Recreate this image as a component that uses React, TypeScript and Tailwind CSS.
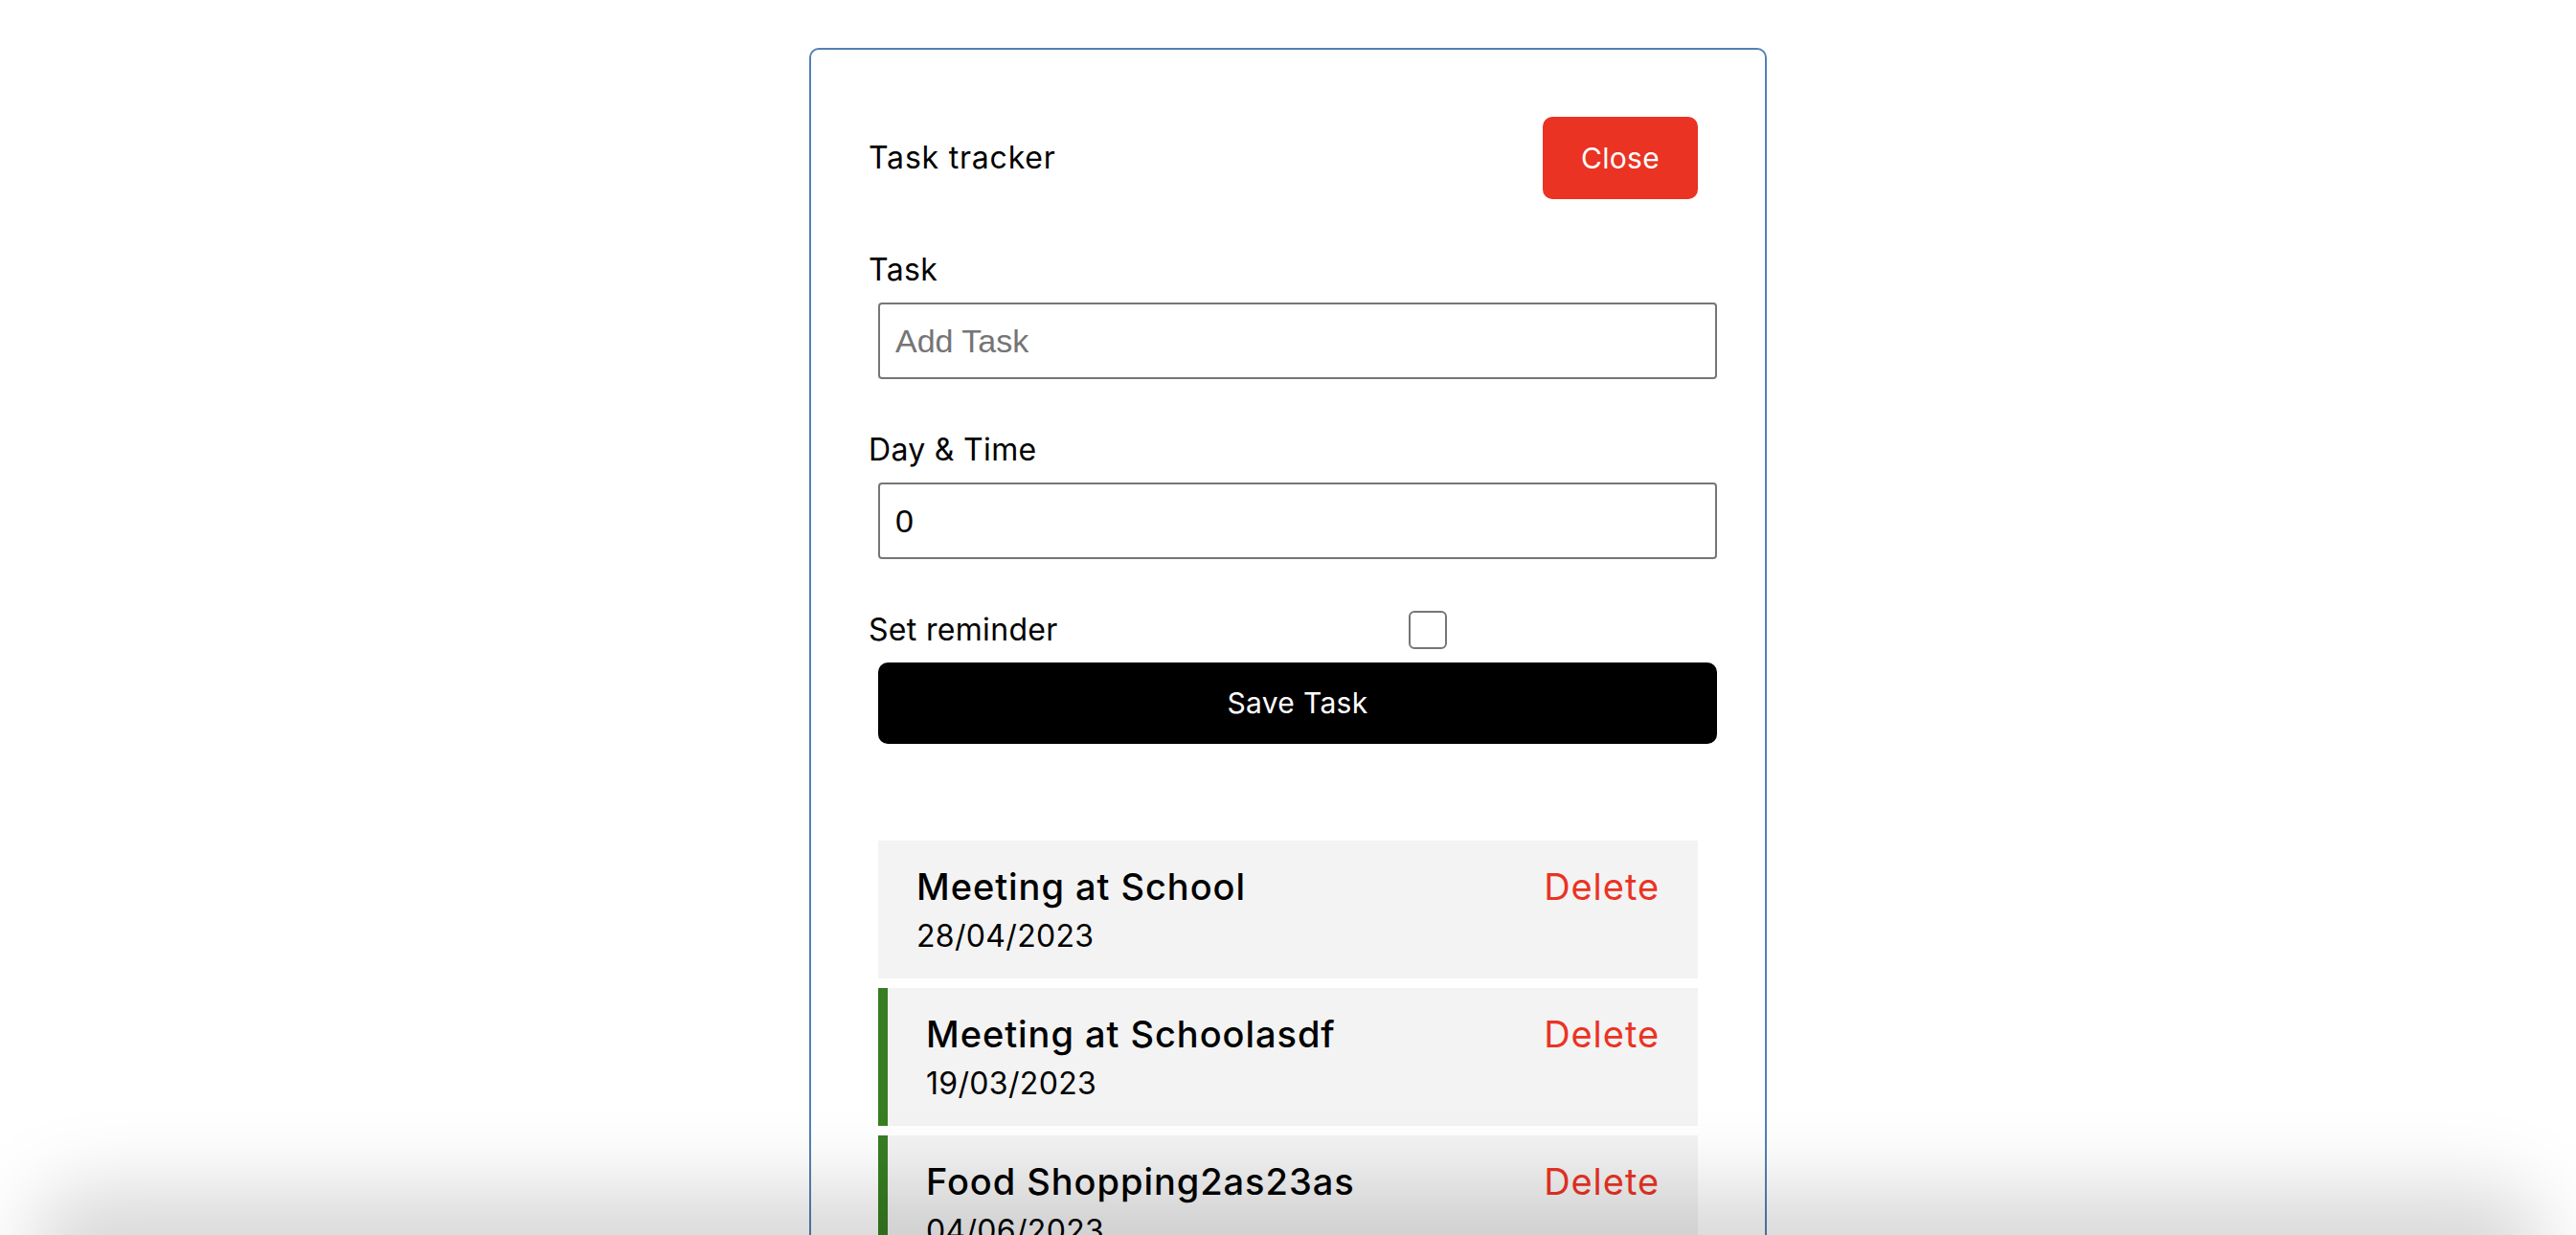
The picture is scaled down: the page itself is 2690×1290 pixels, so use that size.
import React from 'react';

interface Task {
  id: number;
  text: string;
  day: string;
  reminder: boolean;
}

const tasks: Task[] = [
  { id: 1, text: 'Meeting at School', day: '28/04/2023', reminder: false },
  { id: 2, text: 'Meeting at Schoolasdf', day: '19/03/2023', reminder: true },
  { id: 3, text: 'Food Shopping2as23as', day: '04/06/2023', reminder: true },
];

const font = "font-['Inter','Noto_Sans',sans-serif] tracking-[0.02em]";

const App: React.FC = () => {
  return (
    <div className={`relative min-h-screen bg-white text-black ${font}`}>
      <div className="mx-auto mt-[50px] w-[1000px] rounded-[10px] border-2 border-[#5480b2] p-[60px]">
        {/* header */}
        <header className="mb-[40px] flex items-center justify-between">
          <h1 className="text-[32px] font-normal leading-[48px] tracking-[0.025em]">Task tracker</h1>
          <button className="m-[10px] h-[86px] rounded-[10px] bg-[#ea3323] px-[40px] text-[30px] leading-[45px] text-white">
            Close
          </button>
        </header>

        {/* add form */}
        <form onSubmit={(e) => e.preventDefault()} className="flex flex-col">
          <div className="mb-[40px] flex flex-col">
            <label className="block text-[32px] leading-[48px]">Task</label>
            <input
              type="text"
              placeholder="Add Task"
              className="m-[10px] block h-[80px] w-[876px] rounded-[4px] border-2 border-[#767676] px-[16px] py-[6px] font-['Liberation_Sans',Arial,sans-serif] text-[34px] tracking-normal placeholder:text-[#757575]"
            />
          </div>
          <div className="mb-[40px] flex flex-col">
            <label className="block text-[32px] leading-[48px]">Day &amp; Time</label>
            <input
              type="text"
              defaultValue="0"
              className="m-[10px] block h-[80px] w-[876px] rounded-[4px] border-2 border-[#767676] px-[16px] py-[6px] font-['Liberation_Sans',Arial,sans-serif] text-[34px] tracking-normal"
            />
          </div>
          <div className="flex h-[48px] items-center">
            <label className="w-[298px] text-[32px] leading-[48px]">Set reminder</label>
            <div className="flex w-[571px] justify-center">
              <input
                type="checkbox"
                className="h-[40px] w-[40px] appearance-none rounded-[6px] border-2 border-[#767676] bg-white"
              />
            </div>
          </div>
          <button
            type="submit"
            className="mx-[10px] mt-[10px] block h-[85px] w-[876px] rounded-[10px] bg-black text-[30px] leading-[45px] text-white"
          >
            Save Task
          </button>
        </form>

        {/* task list */}
        <div className="mt-[101px] flex flex-col gap-[10px]">
          {tasks.map((task) => (
            <div
              key={task.id}
              className={`mx-[10px] bg-[#f3f3f3] px-[40px] py-[20px] ${
                task.reminder ? 'border-l-[10px] border-[#377e22]' : ''
              }`}
            >
              <h3 className="flex items-center justify-between text-[38px] font-medium leading-[56px] tracking-[0.025em]">
                {task.text}
                <span className="font-normal text-[#ea3323]">Delete</span>
              </h3>
              <p className="text-[32px] leading-[48px]">{task.day}</p>
            </div>
          ))}
        </div>
      </div>

      {/* soft shadow at the bottom edge of the window */}
      <div className="pointer-events-none fixed inset-x-[30px] bottom-[-80px] h-[130px] rounded-[90px] bg-black/15 blur-[40px]" />
    </div>
  );
};

export default App;
